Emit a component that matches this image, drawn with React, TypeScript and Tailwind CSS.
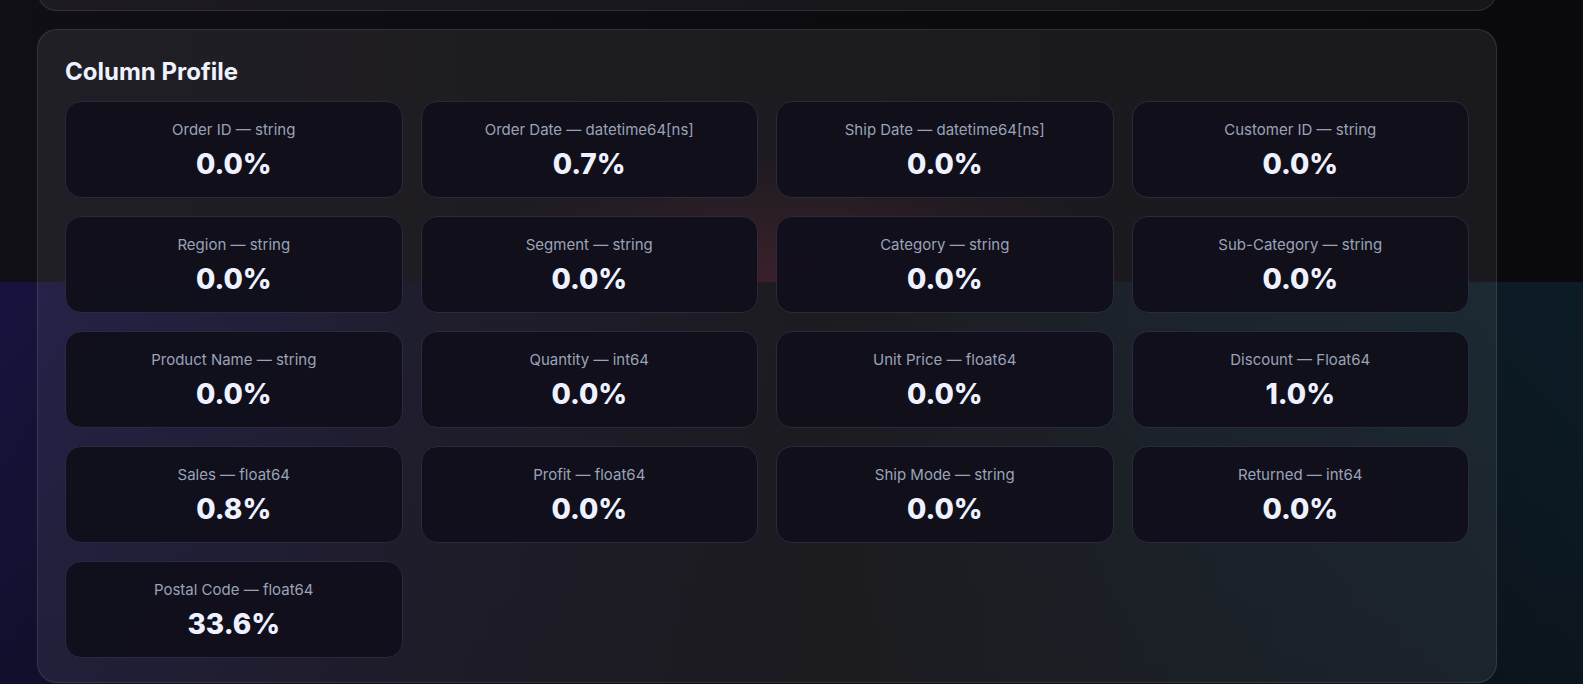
import React from "react";

const columns = [
  { name: "Order ID", type: "string", value: "0.0%" },
  { name: "Order Date", type: "datetime64[ns]", value: "0.7%" },
  { name: "Ship Date", type: "datetime64[ns]", value: "0.0%" },
  { name: "Customer ID", type: "string", value: "0.0%" },
  { name: "Region", type: "string", value: "0.0%" },
  { name: "Segment", type: "string", value: "0.0%" },
  { name: "Category", type: "string", value: "0.0%" },
  { name: "Sub-Category", type: "string", value: "0.0%" },
  { name: "Product Name", type: "string", value: "0.0%" },
  { name: "Quantity", type: "int64", value: "0.0%" },
  { name: "Unit Price", type: "float64", value: "0.0%" },
  { name: "Discount", type: "Float64", value: "1.0%" },
  { name: "Sales", type: "float64", value: "0.8%" },
  { name: "Profit", type: "float64", value: "0.0%" },
  { name: "Ship Mode", type: "string", value: "0.0%" },
  { name: "Returned", type: "int64", value: "0.0%" },
  { name: "Postal Code", type: "float64", value: "33.6%" },
];

const ProfileCard = ({ name, type, value }: { name: string; type: string; value: string }) => {
  return (
    <div className="flex flex-col items-center rounded-2xl border border-[#2a2940] bg-[#100f1a]/95 pt-[17px] pb-4">
      <p className="text-[15px] leading-[22px] text-[#9aa3b8]">
        {name} — {type}
      </p>
      <p className="mt-[6px] text-[28px] leading-[34px] font-extrabold text-[#eef1ff]">{value}</p>
    </div>
  );
};

const App = () => {
  return (
    <div className="h-[684px] overflow-hidden pl-[37px] font-['Inter',sans-serif] bg-no-repeat bg-[length:100%_282px,100%_282px,100%_100%,100%_100%] bg-[radial-gradient(ellipse_340px_130px_at_790px_282px,rgba(120,28,55,0.32),transparent),linear-gradient(to_right,#110f16,#0b0a0f_60%,#0a090d),linear-gradient(to_bottom,transparent_300px,rgba(10,9,14,0.35)),linear-gradient(to_right,#17133e,#0f0d1c_30%,#0c0b11_52%,#0c141b_72%,#0c1c27)]">
      <div className="-mt-[49px] h-[60px] w-[1460px] rounded-[20px] border border-white/10 bg-white/[0.05]" />

      <div className="mt-[18px] w-[1460px] rounded-[20px] border border-white/10 bg-white/[0.065] px-[27px] pt-[26px] pb-6">
        <h2 className="mb-[13px] text-2xl leading-8 font-bold text-[#eef1ff]">Column Profile</h2>
        <div className="grid grid-cols-4 gap-[18px]">
          {columns.map((c) => (
            <ProfileCard key={c.name} name={c.name} type={c.type} value={c.value} />
          ))}
        </div>
      </div>
    </div>
  );
};

export default App;
